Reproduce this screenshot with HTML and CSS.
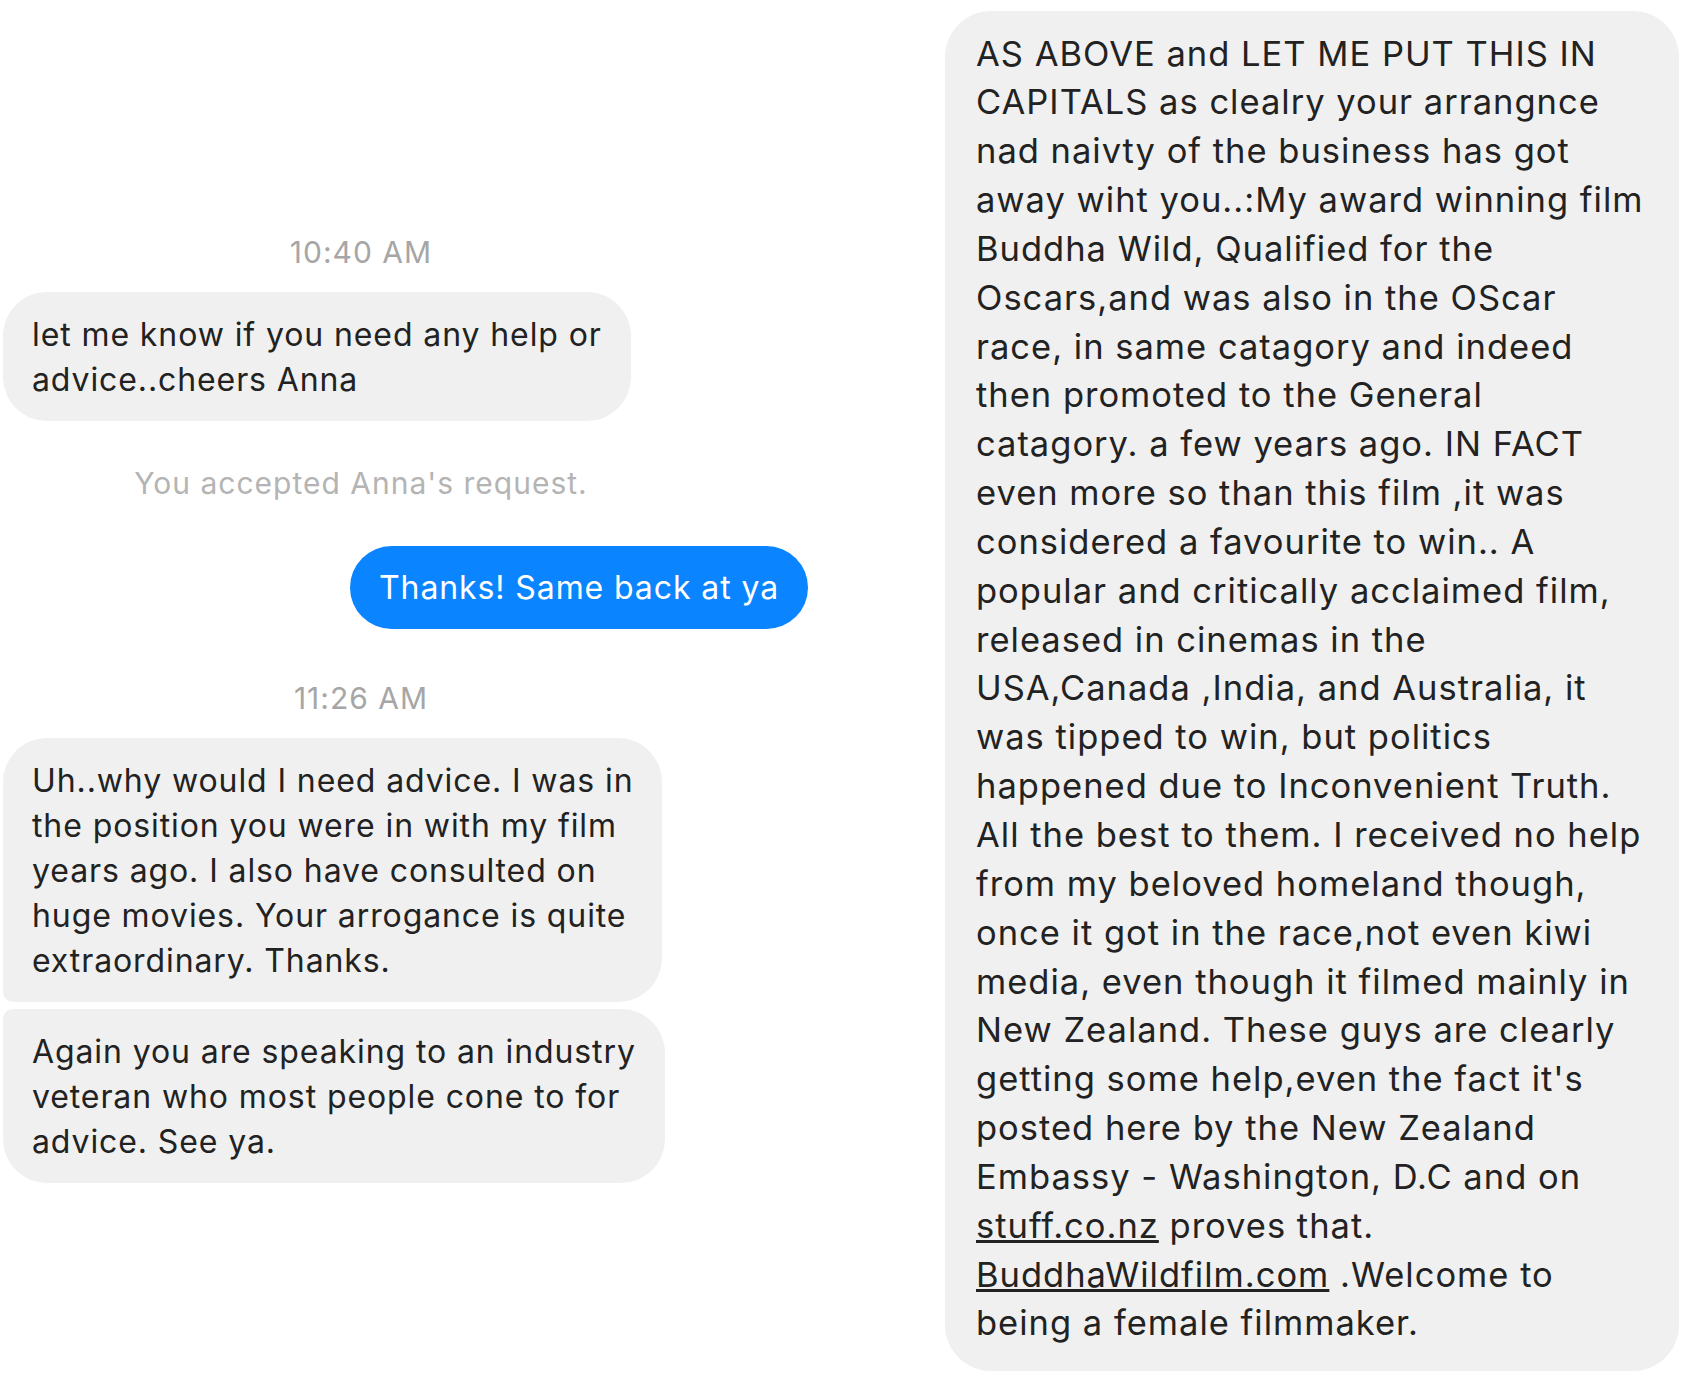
FILE: index.html
```html
<!DOCTYPE html>
<html lang="en">
<head>
    <meta charset="UTF-8">
    <meta name="viewport" content="width=device-width, initial-scale=1.0">
    <title>Messages</title>
    <link rel="stylesheet" href="styles.css">
</head>
<body>

    <div class="page">

        <!-- Left conversation -->
        <div class="thread">
            <div class="stamp">10:40 AM</div>

            <div class="bubble them">
                let me know if you need any help or<br>
                advice..cheers Anna
            </div>

            <div class="stamp notice">You accepted Anna's request.</div>

            <div class="row-me">
                <div class="bubble me">Thanks! Same back at ya</div>
            </div>

            <div class="stamp second">11:26 AM</div>

            <div class="bubble them first">
                Uh..why would I need advice. I was in<br>
                the position you were in with my film<br>
                years ago. I also have consulted on<br>
                huge movies. Your arrogance is quite<br>
                extraordinary. Thanks.
            </div>
            <div class="bubble them last">
                Again you are speaking to an industry<br>
                veteran who most people cone to for<br>
                advice. See ya.
            </div>
        </div>

        <!-- Right long message -->
        <div class="long">
            <div class="bubble big">
                AS ABOVE and LET ME PUT THIS IN<br>
                CAPITALS as clealry your arrangnce<br>
                nad naivty of the business has got<br>
                away wiht you..:My award winning film<br>
                Buddha Wild, Qualified for the<br>
                Oscars,and was also in the OScar<br>
                race, in same catagory and indeed<br>
                then promoted to the General<br>
                catagory. a few years ago. IN FACT<br>
                even more so than this film ,it was<br>
                considered a favourite to win.. A<br>
                popular and critically acclaimed film,<br>
                released in cinemas in the<br>
                USA,Canada ,India, and Australia, it<br>
                was tipped to win, but politics<br>
                happened due to Inconvenient Truth.<br>
                All the best to them. I received no help<br>
                from my beloved homeland though,<br>
                once it got in the race,not even kiwi<br>
                media, even though it filmed mainly in<br>
                New Zealand. These guys are clearly<br>
                getting some help,even the fact it's<br>
                posted here by the New Zealand<br>
                Embassy - Washington, D.C and on<br>
                <a href="#">stuff.co.nz</a> proves that.<br>
                <a href="#">BuddhaWildfilm.com</a> .Welcome to<br>
                being a female filmmaker.
            </div>
        </div>

    </div>

</body>
</html>
```

FILE: styles.css
```css
body {
    margin: 0;
    background: #ffffff;
    font-family: Inter, "Noto Sans", sans-serif;
    color: #222222;
}

.page {
    display: flex;
    align-items: flex-start;
    padding-left: 3px;
}

.thread {
    width: 805px;
    display: flex;
    flex-direction: column;
    align-items: flex-start;
    padding-top: 232px;
}

.stamp {
    width: 716px;
    text-align: center;
    font-size: 30px;
    letter-spacing: 1px;
    line-height: 40px;
    color: #a6a6a6;
}

.notice {
    margin-top: 42px;
    color: #b4b4b4;
}

.second {
    margin-top: 49px;
}

.bubble {
    background: #f0f0f0;
    border-radius: 44px;
    font-size: 32px;
    letter-spacing: 0.9px;
    line-height: 45px;
    padding: 19.5px 29px;
}

.them {
    margin-top: 20px;
}

.them.first {
    border-bottom-left-radius: 10px;
}

.them.last {
    margin-top: 7px;
    border-top-left-radius: 10px;
}

.row-me {
    width: 100%;
    display: flex;
    justify-content: flex-end;
    margin-top: 43px;
}

.bubble.me {
    background: #0a84ff;
    color: #ffffff;
    padding: 19px 29px;
}

.long {
    margin-left: auto;
    padding: 11px 5px 0 0;
}

.bubble.big {
    width: 734px;
    box-sizing: border-box;
    font-size: 34.5px;
    letter-spacing: 1px;
    line-height: 48.85px;
    padding: 18.5px 20px 22.5px 31px;
    border-radius: 46px;
    white-space: nowrap;
}

.bubble.big a {
    color: #222222;
}
```
